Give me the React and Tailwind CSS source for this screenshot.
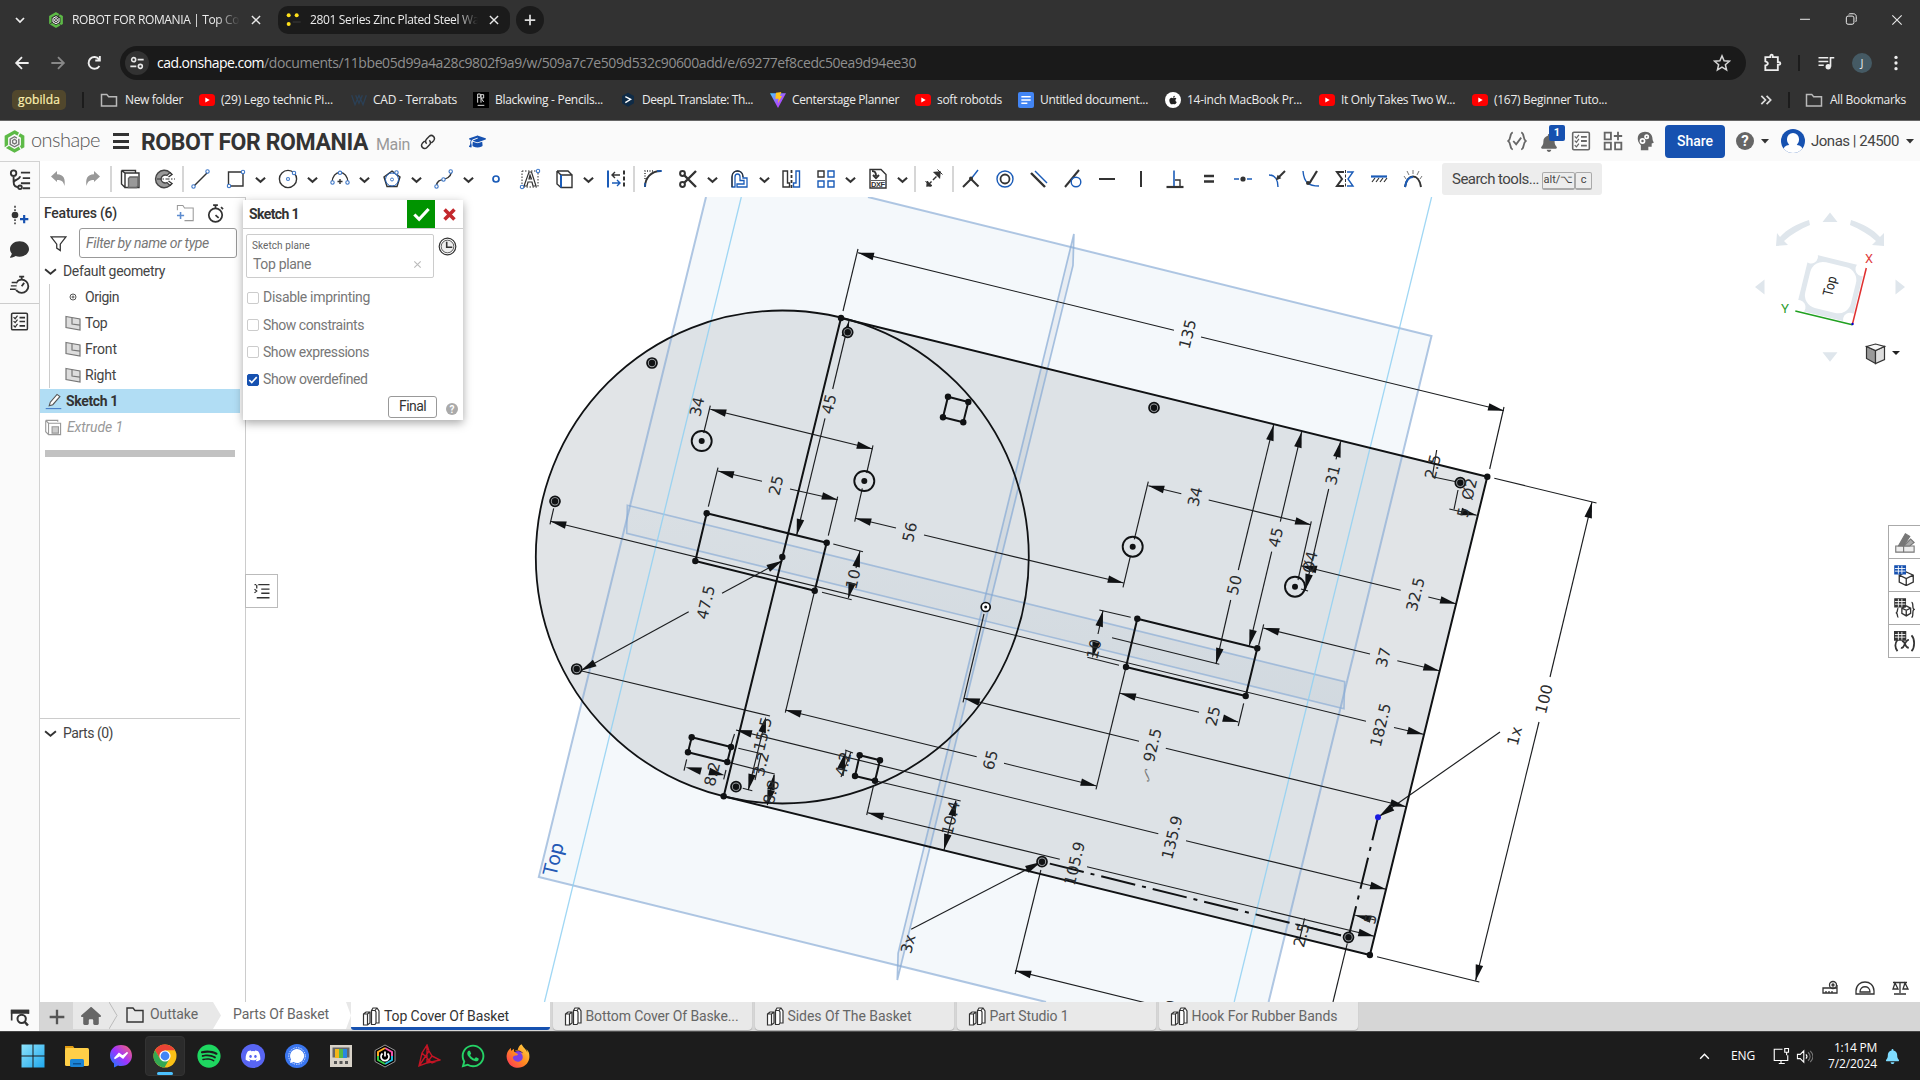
import React, { useLayoutEffect, useRef } from "react";
import { FaSpotify, FaWhatsapp, FaDiscord, FaFirefoxBrowser, FaApple, FaGraduationCap, FaBell, FaComment, FaHouse } from "react-icons/fa6";

/* Text whose tracking is adjusted so that it fills a given width. */
function Fit({ w, className = "", children }) {
  const ref = useRef(null);
  useLayoutEffect(() => {
    const el = ref.current;
    el.style.letterSpacing = "0px";
    const natural = el.getBoundingClientRect().width;
    el.style.letterSpacing = (w - natural) / el.textContent.length + "px";
  }, [w, children]);
  return <span ref={ref} className={"inline-block shrink-0 whitespace-pre " + className}>{children}</span>;
}

const Svg = ({ s = 24, className = "", children, ...p }) => (
  <svg width={s} height={s} viewBox="0 0 24 24" fill="none" stroke="#333" strokeWidth="1.5" className={"shrink-0 " + className} {...p}>{children}</svg>
);
const B = "#1b5cb8";

/* ---------- browser ---------- */
const OnshapeMark = ({ s = 16, grey = "#fff", bg = "#323232" }) => (
  <Svg s={s} stroke="none">
    <path d="M12 2.200 20.500 7v10L12 21.800 3.500 17V7Z" stroke="#5dba47" strokeWidth="3.600" fill={bg} />
    <path d="M0 20l6-4M18 2l-3 5M20 22l-3-5" stroke={bg} strokeWidth="1.300" />
    <path d="M16.500 9v6L12 17.500 7.500 15V9.500L12 7l2.500 1.400" stroke={grey} strokeWidth="1.500" />
    <path d="M12 9.800 14 11v2.300l-2 1.200-2-1.200V11Z" stroke={grey} strokeWidth="1.400" />
  </Svg>
);
const XIcon = ({ s = 16, c = "#e8e8e8", sw = 2.4 }) => <Svg s={s} stroke={c} strokeWidth={sw}><path d="m5 5 14 14M19 5 5 19" /></Svg>;
const YT = () => (
  <svg width="16" height="16" viewBox="0 0 16 16" className="shrink-0"><rect y="2" width="16" height="12" rx="3.500" fill="#f00" /><path d="m6.300 5.500 4.400 2.500-4.400 2.500Z" fill="#fff" /></svg>
);
const Folder = () => <Svg s={18} stroke="#b9b9b9" strokeWidth="2"><path d="M2 4.500h7l2.500 3H22v12.500H2Z" /></Svg>;

const bookmarks = [
  { i: <Folder />, t: "New folder", w: 58, b: "w-[99px]", g: "gap-[7px]" },
  { i: <YT />, t: "(29) Lego technic Pi...", w: 112, b: "w-[152px]" },
  { i: <Svg s={16} stroke="#2b4056" strokeWidth="2"><path d="m1 5 5 14 6-14 6 14 5-14M7 5l5 12 5-12" /></Svg>, t: "CAD - Terrabats", w: 84, b: "w-[122px]" },
  { i: <Svg s={16} stroke="#ddd" strokeWidth="1.500"><path d="M0 0h24v24H0Z" fill="#000" stroke="none" /><path d="M7 3v13M7 3h4v5H7m5 8V4h4v5h-4l4 6M7 20h10" /></Svg>, t: "Blackwing - Pencils...", w: 108, b: "w-[147px]" },
  { i: <Svg s={16} stroke="none"><path d="M12 1 21 6v11l-9 5-9-5V6Z" fill="#0f2b46" /><path d="m8 7 8 4-8 5" stroke="#fff" strokeWidth="2" /></Svg>, t: "DeepL Translate: Th...", w: 111, b: "w-[150px]" },
  { i: <Svg s={16} stroke="none"><defs><linearGradient id="vt" x1="0" y1="0" x2="1" y2="1"><stop stopColor="#41d1ff" /><stop offset=".5" stopColor="#a05bff" /><stop offset="1" stopColor="#bd34fe" /></linearGradient></defs><path d="M0 2h24L12 24Z" fill="url(#vt)" /><path d="m9 1 8-1-2 6h3l-6 11 1-7H8Z" fill="#ffc61a" /></Svg>, t: "Centerstage Planner", w: 107, b: "w-[145px]" },
  { i: <YT />, t: "soft robotds", w: 65, b: "w-[103px]" },
  { i: <Svg s={16} stroke="#fff" strokeWidth="2.200"><rect width="24" height="24" rx="3" fill="#4285f4" stroke="none" /><path d="M5 7h14M5 12h14M5 17h9" /></Svg>, t: "Untitled document...", w: 108, b: "w-[147px]" },
  { i: <span className="flex h-4 w-4 shrink-0 items-center justify-center rounded-full bg-white text-[10px] text-[#222]"><FaApple /></span>, t: "14-inch MacBook Pr...", w: 115, b: "w-[154px]" },
  { i: <YT />, t: "It Only Takes Two W...", w: 114, b: "w-[153px]" },
  { i: <YT />, t: "(167) Beginner Tuto...", w: 113, b: "w-[153px]" },
];

function Browser() {
  return (
    <div className="h-[121px] w-full border-b border-[#666] bg-[#323232] font-['Open_Sans',sans-serif] text-[12px] text-[#ececec]">
      <div className="flex h-[40px] items-center">
        <div className="flex w-[40px] justify-center"><Svg s={12} stroke="#eee" strokeWidth="3.500"><path d="m4 8 8 8 8-8" /></Svg></div>
        <div className="flex w-[238px] items-center pl-2"><OnshapeMark /><span className="ml-2 flex w-[168px] overflow-hidden [mask-image:linear-gradient(to_right,black_86%,transparent)]"><Fit w={167}>ROBOT FOR ROMANIA | Top Co</Fit></span><span className="ml-[9px]"><XIcon s={14} /></span></div>
        <div className="flex h-[28px] w-[232px] items-center rounded-[10px] bg-[#1b1b1b] pl-2">
          <Svg s={16} stroke="none"><circle cx="4" cy="5" r="3" fill="#ffe01a" /><circle cx="16" cy="5" r="3" fill="#ffe01a" /><circle cx="4" cy="18" r="3" fill="#ffe01a" /><path d="M10 14h12v2H10Z" fill="#333" /></Svg>
          <span className="ml-2 w-[168px] overflow-hidden [mask-image:linear-gradient(to_right,black_88%,transparent)]"><Fit w={169}>2801 Series Zinc Plated Steel Wa</Fit></span><span className="ml-[9px]"><XIcon s={14} /></span>
        </div>
        <div className="ml-[6px] flex h-[28px] w-[28px] items-center justify-center rounded-full bg-[#1b1b1b]"><Svg s={14} stroke="#ddd" strokeWidth="3"><path d="M12 3v18M3 12h18" /></Svg></div>
        <div className="ml-auto flex w-[138px]">
          <div className="flex w-[46px] justify-center"><Svg s={14} stroke="#eee" strokeWidth="1.700"><path d="M3.500 12.500h17" /></Svg></div>
          <div className="flex w-[46px] justify-center"><Svg s={14} stroke="#eee" strokeWidth="1.700"><rect x="4" y="7" width="13" height="14" rx="3" /><path d="M8 4c1-1 2-1 4-1h4c3 0 5 2 5 5v5c0 2 0 3-1 4" /></Svg></div>
          <div className="flex w-[46px] justify-center"><XIcon s={16} sw={1.700} /></div>
        </div>
      </div>
      <div className="flex h-[46px] items-center">
        <div className="flex w-[40px] shrink-0 justify-center pl-[4px]"><Svg s={20} stroke="#eee" strokeWidth="2.200"><path d="M20 12H5m7-7-7 7 7 7" /></Svg></div>
        <div className="flex w-[36px] shrink-0 justify-center"><Svg s={20} stroke="#888" strokeWidth="2.200"><path d="M4 12h15m-7-7 7 7-7 7" /></Svg></div>
        <div className="flex w-[36px] shrink-0 justify-center"><Svg s={20} stroke="#eee" strokeWidth="2.300"><path d="M18.500 15.500A7 7 0 1 1 18 7.500M19 3.500v5.500h-5.500" /></Svg></div>
        <div className="ml-2 flex h-[34px] w-[1626px] shrink-0 items-center rounded-full bg-[#1a1a1a] pl-[5px] pr-[15px]">
          <span className="flex h-6 w-6 items-center justify-center rounded-full bg-[#323232]"><Svg s={16} stroke="#e8e8e8" strokeWidth="2.400"><circle cx="7" cy="7" r="3" /><path d="M13 7h9M2 17h9" /><circle cx="17" cy="17" r="3" /></Svg></span>
          <div className="-mt-px ml-2 flex text-[14px]"><Fit w={107} className="text-white">cad.onshape.com</Fit><Fit w={652} className="text-[#8f8f8f]">/documents/11bbe05d99a4a28c9802f9a9/w/509a7c7e509d532c90600add/e/69277ef8cedc50ea9d94ee30</Fit></div>
          <Svg s={18} stroke="#d5d5d5" strokeWidth="2" className="ml-auto"><path d="m12 2.500 2.800 6.500 7 .6-5.300 4.600 1.600 6.900-6.100-3.700-6.100 3.700 1.600-6.900L2.200 9.600l7-.6Z" /></Svg>
        </div>
        <div className="flex w-[52px] shrink-0 justify-center"><Svg s={20} stroke="#eee" strokeWidth="2.200"><path d="M4 5h6V3.500a1.500 1.500 0 0 1 3 0V5h6v6h1.500a1.500 1.500 0 0 1 0 3H19v6.500H4V15c4-1 4-4 0-5Z" /></Svg></div>
        <div className="h-4 w-[2px] bg-[#1c1c1c]" />
        <div className="flex w-[52px] shrink-0 justify-center"><Svg s={18} stroke="#eee" strokeWidth="2.200"><path d="M2 5h13M2 10h13M2 15h7" /><circle cx="15" cy="17" r="2.500" fill="#eee" /><path d="M18 17V5h5" /></Svg></div>
        <div className="flex h-[20px] w-[20px] shrink-0 items-center justify-center rounded-full bg-[#455a64] text-[11px]">J</div>
        <div className="flex w-[52px] justify-center"><Svg s={18} stroke="none"><g fill="#eee"><circle cx="12" cy="4.500" r="2.200" /><circle cx="12" cy="12" r="2.200" /><circle cx="12" cy="19.500" r="2.200" /></g></Svg></div>
      </div>
      <div className="flex h-[28px] items-center">
        <div className="ml-[12px] flex h-[20px] w-[54px] items-center justify-center rounded-[5px] bg-[#51472c] text-[#fdf0b0] [-webkit-text-stroke:0.200px]"><Fit w={42}>gobilda</Fit></div>
        <div className="ml-4 h-4 w-[2px] bg-[#1c1c1c]" />
        <div className="ml-[16px] flex">
          {bookmarks.map((b, i) => <div key={i} className={"flex shrink-0 items-center " + (b.g || "gap-[6px]") + " " + b.b}>{b.i}<Fit w={b.w}>{b.t}</Fit></div>)}
        </div>
        <div className="ml-auto flex items-center"><Svg s={14} stroke="#ddd" strokeWidth="3"><path d="m4 5 7 7-7 7M13 5l7 7-7 7" /></Svg><div className="ml-[15px] h-4 w-[2px] bg-[#1c1c1c]" /><div className="ml-[15px] flex w-[115px] items-center gap-[7px]"><Folder /><Fit w={76}>All Bookmarks</Fit></div></div>
      </div>
    </div>
  );
}

/* ---------- document header ---------- */
const Caret = () => <svg width="8" height="5" viewBox="0 0 8 5" className="shrink-0"><path d="M0 0h8L4 4.500Z" fill="#333" /></svg>;

function Header() {
  const slot = "flex w-8 justify-center";
  return (
    <div className="flex h-[40px] w-full items-center bg-[#fafafa] font-[Roboto,sans-serif]">
      <div className="ml-[3px]"><OnshapeMark s={23} grey="#777" bg="#fafafa" /></div>
      <Fit w={69} className="ml-[5px] h-[28px] font-[Lato,sans-serif] text-[20px] font-light leading-[25px] text-[#555]">onshape</Fit>
      <div className="ml-[13px] flex w-[16px] flex-col gap-[3.500px]"><i className="h-[3px] bg-[#333]" /><i className="h-[3px] bg-[#333]" /><i className="h-[3px] bg-[#333]" /></div>
      <Fit w={227} className="ml-[12px] pt-[2px] text-[23px] font-bold leading-none text-[#333]">ROBOT FOR ROMANIA</Fit>
      <Fit w={34} className="ml-[8px] pt-[7px] text-[16px] text-[#999]">Main</Fit>
      <Svg s={16} strokeWidth="2.200" className="ml-[10px] mt-[2px]"><path d="M10 14.500a5 5 0 0 1 0-7L14 3.500c4-4 10 2 6.500 6.500l-3.500 3.500M14 9.500a5 5 0 0 1 0 7L10 20.500C6 24.500 0 18.500 3.500 14L7 10.500" /></Svg>
      <FaGraduationCap className="ml-[33px] text-[17px] text-[#1651b0]" />
      <div className="ml-auto flex items-center">
        <div className={slot}><Svg s={20} stroke="#666" strokeWidth="2.200"><path d="M7 2C3 2 5 10 1.500 12 5 14 3 22 7 22M17 2c4 0 2 8 5.500 10C19 14 21 22 17 22M7.500 12l3.500 4 6-8" /></Svg></div>
        <div className={slot + " relative"}><FaBell className="mt-[4px] text-[18px] text-[#666]" /><span className="absolute -top-[5px] left-[16px] flex h-4 w-4 items-center justify-center rounded-[2px] bg-[#1651b0] text-[11px] font-bold text-white">1</span></div>
        <div className={slot}><ListIcon s={20} c="#666" /></div>
        <div className={slot}><Svg s={20} stroke="#666" strokeWidth="2.200"><path d="M2 2h7.500v8H2ZM2 14h7.500v8H2ZM14.500 14H22v8h-7.500ZM18 1v10M13 6h10" /></Svg></div>
        <div className={slot}><Svg s={20} stroke="none"><path d="M12 1c6 0 9 4 9 8.500 0 2 1.500 3.500 1.500 4.500L20 15v4h-4v4H7v-6C1 12 2 1 12 1Z" fill="#666" /><circle cx="9" cy="12" r="2.500" stroke="#fff" strokeWidth="2" /><circle cx="14" cy="7" r="2" stroke="#fff" strokeWidth="2" /></Svg></div>
        <div className="ml-[4px] flex h-[33px] w-[60px] items-center justify-center rounded-[4px] bg-[#1651b0] text-[14px] font-medium text-white"><Fit w={36}>Share</Fit></div>
        <div className="ml-[11px] flex h-[18px] w-[18px] items-center justify-center rounded-full bg-[#666] text-[15px] font-bold text-white">?</div>
        <div className="ml-[7px]"><Caret /></div>
        <div className="relative ml-[12px] h-[24px] w-[24px] overflow-hidden rounded-full bg-[#1651b0]"><i className="absolute left-[6px] top-[4px] h-[13px] w-[12px] rounded-full bg-white" /><i className="absolute left-[2px] top-[16px] h-[12px] w-[20px] rounded-full bg-white" /></div>
        <Fit w={88} className="ml-[6px] text-[15px] text-[#444]">Jonas | 24500</Fit>
        <div className="ml-[7px] mr-[6px]"><Caret /></div>
      </div>
    </div>
  );
}

const ListIcon = ({ s = 20, c = "#333" }) => <Svg s={s} stroke={c} strokeWidth="1.900"><rect x="2" y="1.500" width="20" height="21" rx="1.500" /><path d="M12 7h7M12 12h7M12 17.500h7" strokeWidth="2.200" /><path d="m4.500 6.500 2 2 3-4M4.500 11.500l2 2 3-4M4.500 17l2 2 3-4" strokeWidth="1.500" /></Svg>;

/* ---------- toolbar ---------- */
const dot = (x, y) => <circle cx={x} cy={y} r="1.700" stroke="#3f78c8" strokeWidth="1.100" fill="#fff" />;
const T = {
  undo: <path d="M5 9.500l6-5.500v3.300c7 0 8.500 5 7.500 11.700-1-4.500-3-6-7.500-6V15Z" fill="#999" stroke="none" />,
  redo: <path d="M19 9.500l-6-5.500v3.300c-7 0-8.500 5-7.500 11.700 1-4.500 3-6 7.500-6V15Z" fill="#999" stroke="none" />,
  sketch: <><path d="M3.500 3.500h14v2M3.500 3.500V17l3.500 3.500M3.500 3.500 7 6h14v14.500H7V6" /><path d="M10.500 11.500 12 10h8v9l-1.500 1.500h-8Z" fill="#999" stroke="#666" /></>,
  revolve: <><path d="M17 5.500A8.700 8.700 0 1 0 17 18.500l-3-3a4 4 0 1 1 0-7Z" fill="#999" stroke="#444" /><path d="M4 12h18" strokeDasharray="4 1.500 1.500 1.500" strokeWidth="1.200" /><path d="m17 5.500 2 2-3.500 2.500M17 18.500l2-2-3.500-2.500" /></>,
  line: <><path d="m5 19 14-14" />{dot(4.5, 19.5)}{dot(18.5, 4.500)}</>,
  rect: <><path d="M4.500 5h14.500v14H4.500Z" />{dot(19, 5)}{dot(5, 19)}</>,
  circle: <><circle cx="12" cy="12" r="8.600" /><circle cx="12" cy="12" r="1.500" stroke="#3f78c8" strokeWidth="1.100" />{dot(18, 6)}</>,
  arc: <><path d="M4 16c0-14 16-14 16 0" />{dot(4.500, 15.500)}{dot(19.500, 15.500)}<path d="M12 12v5M9.500 14.500h5" />{dot(12, 5.800)}</>,
  poly: <><path d="M12 4l8 6-3 9.500H7L4 10Z" /><circle cx="12" cy="12.500" r="6.500" stroke={B} strokeWidth="1" /><circle cx="12" cy="12.500" r="1.500" stroke="#3f78c8" strokeWidth="1" />{dot(16.500, 5.500)}</>,
  spline: <><path d="M4.500 19C5 9 17 16 19.500 5" />{dot(4.500, 19.500)}{dot(18.700, 4.500)}{dot(11.500, 12.500)}</>,
  point: <circle cx="12" cy="12" r="3" stroke={B} strokeWidth="1.700" />,
  text: <><path d="M4 4h16v16H4Z" strokeDasharray="1.500 1.500" strokeWidth="1" /><path d="M6 19 11 5h2.500L18 19h-3l-1-4h-4l-1 4ZM11 12h2.500L12 8Z" strokeWidth="1.200" />{dot(20, 4)}{dot(4, 20)}</>,
  use: <><path d="M5 4h11l4 4M5 4v13l4 3.500h11V8H9L5 4" /><path d="M9 8v12.500" stroke={B} strokeWidth="2" /></>,
  mirror: <><path d="M4 3.500v17" stroke={B} strokeWidth="2" /><path d="M20 3.500v17" strokeDasharray="4 2" strokeWidth="2" /><path d="M8 16h8m-3-3 3 3-3 3" stroke={B} /><path d="M16 8H8m3-3L8 8l3 3" /></>,
  fillet: <><path d="M4 20C4 11 10 4 20 4" strokeWidth="2" /><path d="M4 20v-4M16 4h5" stroke={B} /><path d="M4 12V4h8" strokeDasharray="1 1.500" /></>,
  trim: <><path d="M20 4 8 16M20 20 8 8" strokeWidth="2.400" /><circle cx="6.500" cy="6.500" r="2.400" strokeWidth="2" /><circle cx="6.500" cy="17.500" r="2.400" strokeWidth="2" /></>,
  offset: <><path d="M4 20V10c0-8 11-8 11 0v1h4v9H9v-3h7v-3.500h-4V10c0-4-5-4-5 0v10Z" stroke={B} strokeWidth="1.300" /><path d="M4 20V10c0-8 11-8 11 0" strokeWidth="1.300" /></>,
  mir2: <><path d="M4 4h4.500v12h2v4H4Z" /><path d="M12.500 3v18" strokeDasharray="3 2" strokeWidth="1.800" /><path d="M14.500 20v-4H17V4h3.500v16Z" stroke={B} /></>,
  pattern: <><path d="M4 4h6v6H4Z" /><path d="M14 4h6v6h-6ZM4 14h6v6H4ZM14 14h6v6h-6Z" stroke={B} /></>,
  dxf: <><path d="M4 2.500h11l5 5V21H4Z" /><path d="M6 4c3 0 4 1 4 5M7 8l3 3 3-3" strokeWidth="2" /><path d="M5 13.500h14" strokeWidth=".8" /><text x="5" y="20" fontSize="7.500" fontWeight="bold" fill="#333" stroke="none" fontFamily="Liberation Sans" textLength="14">DXF</text></>,
  dim: <><path d="m6 18 11-11" strokeDasharray="5 2" /><path d="M5.500 14 5 19l5-.5M12.500 5.500 18 5l-.5 5.500Z" fill="#333" /><path d="M15.500 2.500l5 5M3.500 14l5 6" strokeWidth="1" /></>,
  coin: <><path d="M4 20 12 12 19.500 19.500" strokeWidth="2" /><path d="m12 12 7-9" stroke={B} /><circle cx="12" cy="11.500" r="2" fill="#333" stroke="none" /></>,
  conc: <><circle cx="12" cy="12" r="4.500" strokeWidth="1.800" /><circle cx="12" cy="12" r="8" stroke={B} /></>,
  par: <><path d="m4 6 14 14" strokeWidth="2.400" /><path d="m8 4 12 12" stroke={B} /></>,
  tan: <><path d="M4 20 18 3" strokeWidth="2" /><circle cx="15" cy="15" r="4.800" stroke={B} /></>,
  hor: <path d="M4 12h16" strokeWidth="2" />, ver: <path d="M12 4v16" strokeWidth="2" />,
  perp: <><path d="M3.500 20h17" strokeWidth="2.200" /><path d="M11 19V3.500" stroke={B} strokeWidth="1.600" /><path d="M12 13h5v6" /></>,
  eq: <path d="M7 9h10M7 14.500h10" strokeWidth="2.600" />,
  mid: <><path d="M3 12h5M16 12h5" stroke={B} strokeWidth="1.700" /><circle cx="12" cy="12" r="2.600" fill="#333" stroke="none" /></>,
  norm: <><path d="m20 4-8 8" strokeWidth="2" /><path d="M4 8c6 0 9 5 9 12" stroke={B} /><path d="m12 12 3-1-2-2Z" fill="#333" /></>,
  pierce: <><path d="M10 17 18 4" strokeWidth="2.200" /><path d="M4 4c1 12 6 15 16 15" stroke={B} /><circle cx="9" cy="16" r="2" fill="#333" stroke="none" /></>,
  sym: <><path d="M11 5H4l5 7-5 7h7" strokeWidth="2" /><path d="M12.500 3v18" strokeDasharray="3 1.500" strokeWidth="1" /><path d="M14 5h6l-5 7 5 7h-6" stroke={B} /></>,
  fix: <><path d="M4 9.500h16" stroke={B} strokeWidth="2.200" /><path d="m5 15 3-4M9 15l3-4M13 15l3-4M17 15l3-4" strokeWidth="1.200" /></>,
  curv: <><path d="M4 20C6 6 18 6 20 20" strokeWidth="2" /><path d="M4 20c1-6 4-10 8-10" stroke={B} strokeWidth="2" /><path d="M5 12 3 9M8 8 6 4M12 7V3M16 8l2-4M19 12l2-3" strokeWidth="1" stroke="#777" /></>,
};
const Tool = ({ n, c = "w-[35px]" }) => <div className={"flex shrink-0 justify-center " + c}><Svg s={24} strokeWidth="1.400">{T[n]}</Svg></div>;
const Chev = () => <div className="flex w-[17px] shrink-0 justify-start pl-[2px]"><Svg s={11} strokeWidth="4.500"><path d="m2 8 10 9L22 8" /></Svg></div>;
const Sep = () => <div className="h-[26px] w-[2px] shrink-0 bg-[#d6d6d6]" />;
const Drop = ({ n }) => <><Tool n={n} /><Chev /></>;

function Toolbar() {
  return (
    <div className="flex h-[36px] items-center bg-white font-[Roboto,sans-serif]">
      <Tool n="undo" /><Tool n="redo" /><Sep /><Tool n="sketch" /><Tool n="revolve" /><Sep /><Tool n="line" c="w-[34px]" />
      <Drop n="rect" /><Drop n="circle" /><Drop n="arc" /><Drop n="poly" /><Drop n="spline" /><Tool n="point" /><Tool n="text" c="w-[33px]" />
      <Drop n="use" /><Tool n="mirror" /><Sep /><Tool n="fillet" /><Drop n="trim" /><Drop n="offset" /><Tool n="mir2" c="w-[34px]" /><Drop n="pattern" /><Drop n="dxf" />
      <div className="w-[2px]" /><Sep /><Tool n="dim" c="w-[36px]" /><Sep />
      {["coin", "conc", "par", "tan", "hor", "ver", "perp", "eq", "mid", "norm", "pierce", "sym", "fix", "curv"].map((n) => <Tool key={n} n={n} c="w-[34px]" />)}
      <div className="ml-[12px] flex h-[32px] w-[160px] items-center rounded-[3px] bg-[#ededed] pl-[10px] text-[15px] text-[#444]">
        <Fit w={87}>Search tools...</Fit>
        <span className="ml-[3px] mt-[3px] flex h-[18px] w-[33px] items-center justify-center rounded-[2px] border border-b-2 border-[#aaa] text-[11px]">alt/⌥</span>
        <span className="mt-[3px] flex h-[18px] w-[17px] items-center justify-center rounded-[2px] border border-b-2 border-[#aaa] text-[11px]">c</span>
      </div>
    </div>
  );
}

/* ---------- left side ---------- */
const Stopwatch = ({ s = 19 }) => <Svg s={s} strokeWidth="2.200"><circle cx="12" cy="14" r="8.500" /><path d="M9 1.500h6M12 2v4M19 4l2.500 2.500M12 14l4 3.500" /></Svg>;
function Rail() {
  const cell = "flex w-full justify-center items-center ";
  return (
    <div className="flex h-[870px] w-[40px] shrink-0 flex-col items-center border-r border-t border-[#d2d2d2] bg-[#fafafa]">
      <div className={cell + "h-[35px]"}><Svg s={22} strokeWidth="2"><circle cx="5" cy="4.500" r="3" /><path d="M5 8v6c0 4 2 6 6 6M12 8c0 4-7 3-7 7M13 4h10M15 10h8M13 15.500h10M15 21h8" /><circle cx="12" cy="20" r="2" /></Svg></div>
      <div className={cell + "h-[35px]"}><Svg s={20} stroke="none"><path d="M6 1v22" stroke="#333" strokeWidth="1.800" strokeDasharray="2.200 1.800" /><circle cx="6" cy="12" r="4" fill="#333" /><path d="M17 12v10M12 17h10" stroke="#1651b0" strokeWidth="2.600" /></Svg></div>
      <div className={cell + "h-[35px]"}><FaComment className="text-[19px] text-[#333]" /></div>
      <div className={cell + "h-[36px]"}><Svg s={20} strokeWidth="2.200"><circle cx="14" cy="13.500" r="8" /><path d="M11 2h6M14 2v4M14 13.500l3-4" /><path d="M0 12h8M1 16h7M3 8h5" stroke="#fafafa" strokeWidth="4" /><path d="M2 9h7M1 13h7M0 17h7" strokeWidth="1.700" /></Svg></div>
      <div className="h-px w-full bg-[#ccc]" />
      <div className={cell + "h-[35px]"}><ListIcon s={19} /></div>
      <div className="mt-auto flex h-[27px] w-full items-center justify-center"><Svg s={20} strokeWidth="2"><path d="M2 15V3h20v4" /><path d="M2 3h20v3H2Z" fill="#333" /><circle cx="14" cy="13" r="5" strokeWidth="2.400" /><path d="m17.500 16.500 4 4.500" strokeWidth="3" /></Svg></div>
    </div>
  );
}
const PlaneIcon = () => <svg width="16" height="16" viewBox="0 0 16 16" fill="none" stroke="#777" strokeWidth="1.200"><path d="M1 1.500 15 4v11L1 12.500Z" fill="#ddd" /><path d="M7 3v6l8 1.200" /></svg>;
const chevD = <Svg s={13} strokeWidth="3.600" className="mr-[6px]"><path d="m2 8 10 8L22 8" /></Svg>;

function Features() {
  const row = "flex h-[26px] items-center text-[14px] text-[#444]";
  return (
    <div className="flex h-[805px] w-[206px] shrink-0 flex-col border-r border-t border-[#ccc] bg-white font-[Roboto,sans-serif]">
      <div className="flex h-[30px] items-center pl-[4px] pt-px">
        <Fit w={73} className="text-[14px] font-medium text-[#333]">Features (6)</Fit>
        <Svg s={19} stroke="#999" className="ml-[58px]"><path d="M3 8V2h7l2 3h11v16h-11" strokeWidth="1.300" /><path d="M7 10v9M2.500 14.500h9" stroke="#5d8ccf" strokeWidth="2" /></Svg>
        <div className="ml-[12px]"><Stopwatch /></div>
      </div>
      <div className="flex h-[30px] items-center pl-[10px]">
        <Svg s={17} strokeWidth="1.800"><path d="M1.500 2.500h21L14.500 13v9l-5-3.500V13Z" /></Svg>
        <div className="ml-[12px] flex h-[30px] w-[158px] items-center rounded-[3px] border border-[#999] pl-[6px] text-[14px] italic text-[#777]"><Fit w={123}>Filter by name or type</Fit></div>
      </div>
      <div className={row + " pl-[4px]"}>{chevD}<Fit w={102}>Default geometry</Fit></div>
      <div className="ml-[9px] border-l border-[#ccc]">
        <div className={row + " pl-[19px]"}><svg width="8" height="8" viewBox="0 0 8 8" fill="none" stroke="#555"><circle cx="4" cy="4" r="3" /><circle cx="4" cy="4" r="1" /></svg><Fit w={34} className="ml-[8px]">Origin</Fit></div>
        <div className={row + " gap-[4px] pl-[15px]"}><PlaneIcon /><Fit w={22}>Top</Fit></div>
        <div className={row + " gap-[4px] pl-[15px]"}><PlaneIcon /><Fit w={32}>Front</Fit></div>
        <div className={row + " gap-[4px] pl-[15px]"}><PlaneIcon /><Fit w={31}>Right</Fit></div>
      </div>
      <div className="mt-px flex h-[24px] w-[200px] items-center bg-[#b1ddf4] pl-[5px] text-[14px] font-bold text-[#333]"><Svg s={17} stroke="#555" strokeWidth="1.600"><path d="M6 18l1.500-5L17 2l4 3-10 11.500Z" fill="#fff" /><path d="M1 22h22" stroke="#4a80c8" /></Svg><Fit w={52} className="ml-[4px]">Sketch 1</Fit></div>
      <div className="flex h-[28px] items-center pl-[5px] pt-px text-[14px] italic text-[#999]"><Svg s={17} stroke="#999" strokeWidth="1.600"><path d="M1 2h17v2M1 2v16l4 4h17V6H5v16M1 2l4 4" /><path d="M10 11h9v9h-9Z" fill="#ccc" /></Svg><Fit w={56} className="ml-[5px]">Extrude 1</Fit></div>
      <div className="ml-[5px] mt-[9px] h-[7px] w-[190px] bg-[#c2c2c2]" />
      <div className="mt-[261px] w-[200px] border-t border-[#ccc]" />
      <div className={row + " pl-[4px] pt-[2px]"}>{chevD}<Fit w={50}>Parts (0)</Fit></div>
    </div>
  );
}

function SketchDialog() {
  const checks = [["Disable imprinting", 107, 0], ["Show constraints", 101, 0], ["Show expressions", 106, 0], ["Show overdefined", 104, 1]];
  return (
    <div className="absolute left-[243px] top-[39px] h-[220px] w-[220px] bg-white font-[Roboto,sans-serif] text-[14px] text-[#777] shadow-[0_3px_9px_rgba(0,0,0,0.350)]">
      <div className="flex h-[29px] items-center border-b border-[#ccc] pl-[6px] font-bold text-[#333]">
        <Fit w={50}>Sketch 1</Fit>
        <div className="ml-auto flex h-[28px] w-[28px] items-center justify-center bg-[#009400]"><Svg s={19} stroke="#fff" strokeWidth="4"><path d="m3 12 6 6L21 5" /></Svg></div>
        <div className="flex w-[28px] justify-center"><XIcon s={17} c="#c3282d" sw={5} /></div>
      </div>
      <div className="flex h-[49px] pl-[3px] pt-[5px]">
        <div className="h-[44px] w-[188px] rounded-[2px] border border-[#ccc] pl-[5px] pt-[3px]">
          <div className="flex h-[14px] items-center text-[10px] text-[#666]"><Fit w={58}>Sketch plane</Fit></div>
          <div className="flex h-[24px] items-center justify-between pl-[1px] pr-[10px]"><Fit w={58}>Top plane</Fit><XIcon s={11} c="#bbb" sw={2.500} /></div>
        </div>
        <Svg s={19} className="ml-[4px] mt-[3px]"><circle cx="12" cy="12" r="10.500" /><circle cx="12" cy="12" r="8" strokeWidth="1" fill="#eee" /><path d="M11 6v7h7" strokeWidth="2" /></Svg>
      </div>
      <div className="pl-[4px] pt-[6px]">
        {checks.map(([t, w, on]) => (
          <div key={t} className="flex h-[27.400px] items-center gap-[4px]">
            <span className={"flex h-[12px] w-[12px] items-center justify-center rounded-[2px] border " + (on ? "border-[#1651b0] bg-[#1651b0]" : "border-[#ccc] bg-white")}>{on ? <Svg s={10} stroke="#fff" strokeWidth="4"><path d="m3 12 6 6L21 5" /></Svg> : null}</span>
            <Fit w={w}>{t}</Fit>
          </div>
        ))}
      </div>
      <div className="-mt-px flex items-center justify-end pr-[5px] pt-[3px]">
        <div className="flex h-[22px] w-[49px] items-center justify-center rounded-[3px] border border-[#999] text-[#333]"><Fit w={27}>Final</Fit></div>
        <div className="ml-[9px] mt-[5px] flex h-[12px] w-[12px] items-center justify-center rounded-full bg-[#aaa] text-[10px] font-bold text-white">?</div>
      </div>
    </div>
  );
}

/* ---------- sketch canvas ---------- */
const UX = 0.9711, UY = 0.2388;
const unit = (x1, y1, x2, y2) => { const l = Math.hypot(x2 - x1, y2 - y1); return [(x2 - x1) / l, (y2 - y1) / l]; };
function Arrow({ x, y, d }) {
  const [a, b] = d, bx = x - a * 16, by = y - b * 16;
  return <path d={`M${x} ${y}L${bx - b * 3.8} ${by + a * 3.8}L${bx + b * 3.8} ${by - a * 3.8}Z`} fill="#101214" />;
}
const R = [UX, UY], L = [-UX, -UY], U = [UY, -UX], D = [-UY, UX];

const thin = [
  [843, 311, 858, 249], [858, 252.7, 1174, 330.3], [1201, 337, 1504, 410.7], [1504, 407, 1489.7, 469],
  [849, 321, 832.7, 389], [825, 418.3, 796.7, 535],
  [703.7, 433, 710.3, 405.7], [710.3, 409.3, 872.7, 449], [873, 445.3, 866.7, 473],
  [708.3, 506.7, 718, 467.7], [718, 471, 762, 481.3], [790, 489, 837.7, 499.7], [837.7, 496.7, 828.3, 535.7],
  [862.3, 488.3, 854.7, 521.7], [855.3, 518.3, 896, 528], [924, 535, 1123.7, 583], [1130.3, 556.7, 1123, 587.3],
  [1134.3, 539.3, 1148.3, 481.7], [1148.3, 485.7, 1181.3, 493.7], [1208.7, 500, 1311, 524.7], [1311.3, 521.3, 1298, 580],
  [1273.7, 424.7, 1238.3, 570], [1230.7, 600, 1216, 664], [1112, 637.7, 1219.3, 664.3],
  [1301.7, 431.7, 1280.3, 521.7], [1271.7, 551.7, 1249.3, 645.7],
  [1340.7, 441.3, 1336, 459.3], [1328.7, 489, 1305.3, 590], [1301, 589, 1308, 591],
  [1301, 565.7, 1400.7, 590.3], [1428.3, 597, 1456, 603.7],
  [1263.7, 624.3, 1258.7, 645], [1263.3, 628, 1370, 654], [1397.3, 660.7, 1439.3, 670.7],
  [1130.7, 617.3, 1099.3, 610], [1103, 610.7, 1098, 634], [1087.3, 657.3, 1119, 665.3],
  [550.3, 521.3, 1366, 721.3], [1394, 727.500, 1423.3, 734.3], [553.7, 508.3, 550, 524.3],
  [782.3, 560.7, 722, 593.3], [688.7, 611.7, 580.7, 670.7],
  [833.3, 544, 863, 551.7], [822, 592.3, 851.7, 599.7], [860, 551, 856, 568], [851, 588, 848.3, 598],
  [814.7, 590.7, 785.3, 712.7], [785.3, 710, 976.7, 756.7], [1004, 763.3, 1096.6, 786], [1126, 667, 1096, 789.3],
  [963.8, 698.3, 1139, 741.3], [1165.8, 748.3, 1406.2, 806.7], [984, 614, 963, 702.3],
  [1120, 693.3, 1199, 712.3], [1243.7, 703.3, 1238.2, 726], [1228, 719, 1238, 722],
  [736, 730, 1158.3, 833.7], [1186, 840.7, 1386, 889.3], [734.5, 734, 730, 748],
  [580.7, 670.7, 770, 716], [764, 726, 748.3, 790], [742.7, 788.3, 752.3, 790.7],
  [686.7, 759.3, 684, 770.7], [726, 770, 723.7, 779.3],
  [738.3, 748.3, 762.7, 754], [727.3, 762, 774.7, 774], [774, 775, 767.3, 805], [761, 754, 755, 780],
  [845, 750, 853, 753], [846, 751, 843, 776], [851, 752, 841, 777],
  [875, 780.7, 960.7, 801], [956, 801, 944, 850], [873.3, 786.7, 866.7, 815],
  [867.7, 812.7, 1059.8, 859.3], [1087, 866.7, 1374.2, 936.3],
  [1039.7, 862.7, 911.2, 929.3], [1304.6, 918.3, 1299.5, 940], [1295, 924, 1341, 935], [1355.2, 915.3, 1375, 920],
  [1040.9, 870, 1015.2, 974], [1015.2, 970.7, 1144.5, 1002.500], [1347.3, 943.3, 1333, 1002],
  [1378, 817.3, 1500, 732], [1377, 956.7, 1479.3, 982], [1494.3, 478.3, 1596.5, 503], [1475.6, 980.7, 1539, 722], [1550, 677, 1592, 502],
  [1436.7, 450, 1432.3, 476.7], [1432.3, 476.7, 1455, 481.500], [1458, 490, 1454, 509.3], [1449.3, 509, 1476.7, 515.3],
];
const arrows = [
  [858, 252.7, L], [1504, 410.7, R], [849, 321, U], [796.7, 535, D], [710.3, 409.3, L], [872.7, 449, R], [718, 471, L], [837.7, 499.7, R],
  [855.3, 518.3, L], [1123.7, 583, R], [1148.3, 485.7, L], [1311, 524.7, R], [1273.7, 424.7, U], [1216, 664, D], [1301.7, 431.7, U], [1249.3, 645.7, D],
  [1340.7, 441.3, U], [1305.3, 590, D], [1301, 565.7, L], [1456, 603.7, R], [1263.3, 628, L], [1439.3, 670.7, R], [1103, 610.7, U], [1092.3, 658, D],
  [550.3, 521.3, L], [1423.3, 734.3, R], [782.3, 560.7, unit(722, 593.3, 782.3, 560.7)], [580.7, 670.7, unit(688.7, 611.7, 580.7, 670.7)],
  [860, 551, U], [848.3, 598.3, D], [785.3, 710, L], [1096.6, 786, R], [963.8, 698.3, L], [1406.2, 806.7, R], [1120, 693.3, L], [1238.6, 722, R],
  [736, 730, L], [1386, 889.3, R], [766, 716.7, U], [748.3, 790, D], [685.5, 767.3, L], [724.7, 775.3, R], [774.7, 774, U], [767.3, 805.7, D],
  [845, 753, U], [956, 800, U], [944, 850, D], [867.7, 812.7, L], [1374.2, 936.3, R], [1041, 862, unit(911.2, 929.3, 1041, 862)],
  [1355.2, 915.3, L], [1015.2, 970.7, L], [1379, 816.500, unit(1500, 732, 1378, 817.3)], [1475.6, 980.7, D], [1592, 502, U], [1476.7, 515.3, R],
];
const labels = [
  [1187.5, 334, "135"], [829, 404, "45"], [697, 406.7, "34"], [776, 485.3, "25"], [909.7, 532, "56"], [1195, 496.7, "34"], [1234.3, 585, "50"],
  [1275.7, 537.3, "45"], [1332.7, 475, "31"], [1310, 562, "Ø4"], [1415.3, 594.3, "32.5"], [1383.3, 657.3, "37"], [1094, 649, "10"],
  [1380.500, 725, "182.5"], [705.7, 602.3, "47.5"], [853, 579, "10"], [990.3, 760, "65"], [1152.4, 745, "92.5"], [1212.9, 716, "25"],
  [1172, 837.3, "135.9"], [762.7, 734, "15.5"], [712, 774, "8.2"], [761, 764, "3.2"], [771, 792, "8.8"], [843, 764, "4.2"], [950.7, 818, "10.4"],
  [1074.500, 863.3, "105.9"], [908, 944, "3x"], [1301.4, 935, "2.5"], [1370.500, 919, "5"], [1170, 1010, "60"], [1514.500, 736, "1x"], [1544, 699, "100"],
  [1432.7, 466.7, "2.5"], [1469.3, 489, "Ø2"], [1463.3, 512.500, "5"],
];
const rects = [
  [[706.7, 513.3], [826.7, 542.7], [814.7, 590.7], [695.3, 561]],
  [[1137.3, 618.7], [1257.3, 648.3], [1245.7, 696], [1126, 667]],
  [[948, 396.7], [968.3, 402], [963.3, 422.3], [943, 417.3]],
  [[859.7, 755.3], [880, 760.3], [875, 780.7], [855, 776]],
  [[691.7, 737.3], [731, 747], [727.3, 762], [688, 752.3]],
];
const smallHoles = [[652, 363], [555, 501.3], [847.7, 332.3], [576.7, 669], [736, 786.7], [1154, 407.7], [1460.3, 482.7], [1042, 861.7], [1348.500, 937.3]];
const bigHoles = [[701.7, 441], [864.3, 481], [1132.7, 546.7], [1295, 586.7]];

function Canvas() {
  return (
    <svg width="1674" height="805" viewBox="246 197 1674 805" className="block shrink-0 bg-white" fill="none">
      <defs><linearGradient id="band" x1="0" y1="0" x2="0" y2="1"><stop stopColor="#7d98b0" stopOpacity=".04" /><stop offset="1" stopColor="#7d98b0" stopOpacity=".12" /></linearGradient></defs>
      <path d="M538.8 877 706 197 706 160 719 160 1431.500 336 1264 1019 1113 1019Z" fill="#f4f8fb" />
      <path d="M841 318 1487.300 476.700 1369.900 955 723.700 796.300A246.500 246.500 0 0 1 535.800 557A246.500 246.500 0 0 1 841 318Z" fill="rgb(208 213 217 / .63)" />
      <path d="M627.300 505.300 1344.700 681.700 1344 708.700 626.700 533.300Z" fill="url(#band)" stroke="#86a9d4" strokeOpacity=".65" strokeWidth="1.600" />
      <path d="M706 197 538.800 877 1046 1002M868 197 1431.500 336 1268.600 1002" stroke="#86a9d4" strokeOpacity=".65" strokeWidth="2" />
      <path d="M898.100 953.300 1073.900 234 1073 265.500 897.300 980Z" fill="#7d98b0" fillOpacity=".1" stroke="#86a9d4" strokeOpacity=".7" strokeWidth="1.700" />
      <path d="M741.300 197 544.500 1002M1431.600 197 1234.200 1002" stroke="#8fd0f2" strokeOpacity=".85" strokeWidth="1.300" />
      <text transform="translate(560 861) rotate(-76.2)" textAnchor="middle" fontFamily="Roboto" fontSize="20" fill="#2358b5">Top</text>
      <g stroke="#1c1e20" strokeWidth="1.150">{thin.map((l, i) => <path key={i} d={`M${l[0]} ${l[1]}L${l[2]} ${l[3]}`} />)}</g>
      <g stroke="#101214" strokeWidth="2">
        <path d="M841 318 1487.300 476.700 1369.900 955 723.700 796.300Z" />
        <circle cx="782.300" cy="557" r="246.500" strokeWidth="1.800" />
        {rects.map((r, i) => <path key={i} d={"M" + r.map((p) => p.join(" ")).join("L") + "Z"} />)}
        <path d="M1042 861.700 1348.500 937.300" strokeDasharray="35 7 4 7" strokeDashoffset="-8" />
        <path d="M1348.500 937.300 1378 817.300" strokeDasharray="32 7 4 7" />
      </g>
      {arrows.map(([x, y, d], i) => <Arrow key={i} x={x} y={y} d={d} />)}
      {bigHoles.map(([x, y], i) => <g key={i}><circle cx={x} cy={y} r="10" stroke="#101214" strokeWidth="1.900" /><circle cx={x} cy={y} r="3" fill="#101214" /></g>)}
      {smallHoles.map(([x, y], i) => <g key={i}><circle cx={x} cy={y} r="5" stroke="#101214" strokeWidth="1.700" fill="#a0a4a7" /><circle cx={x} cy={y} r="3.200" fill="#101214" /></g>)}
      {rects.flat().concat([[841, 318], [1487.3, 476.7], [1369.9, 955], [723.7, 796.3], [782.3, 557]]).map(([x, y], i) => <circle key={i} cx={x} cy={y} r="3.200" fill="#101214" />)}
      <circle cx="1378" cy="817.300" r="3" fill="#1a1ae0" />
      <circle cx="985.700" cy="607" r="4.500" fill="#fff" stroke="#101214" strokeWidth="1.700" /><circle cx="985.700" cy="607" r="1.500" fill="#101214" />
      <g fontFamily="DejaVu Sans" fontSize="15.500" fill="#2a2c2e" textAnchor="middle">
        {labels.map(([x, y, t], i) => <text key={i} transform={`translate(${x} ${y}) rotate(-76.2)`} y="5.500">{t}</text>)}
      </g>
      <text transform="translate(1146.400 774.300) rotate(-30)" textAnchor="middle" y="5" fontFamily="DejaVu Serif" fontSize="13" fontStyle="italic" fill="#777">∫</text>

      <g fill="#dfe6ec">
        <path d="M1830 212.500l7.500 9.500h-15ZM1830 361.700l7.500-9.500h-15ZM1755 287l9.500-7.500v15ZM1905 287l-9.500-7.500v15Z" />
        <path d="M1809 220c-12 4-22 9-29 17l-3-4-1 13 12-1-4-4c8-7 16-12 26-16ZM1851 220c12 4 22 9 29 17l4-4v13l-12-1 4-4c-8-7-16-12-26-16Z" />
      </g>
      <g transform="rotate(13.800 1830 288)">
        <rect x="1802" y="259" width="57" height="58" fill="#e0e7ed" />
        <rect x="1807" y="264" width="47" height="47" rx="13" fill="#fff" />
        <g fill="#fff"><circle cx="1804" cy="262" r="7" /><circle cx="1857" cy="262" r="7" /><circle cx="1804" cy="314" r="7" /><circle cx="1857" cy="314" r="7" /></g>
      </g>
      <path d="M1795.300 311 1852.300 324.700" stroke="#20a020" strokeWidth="1.500" /><path d="M1852.300 324.700 1866.300 268" stroke="#e03030" strokeWidth="1.500" /><circle cx="1852.500" cy="324" r="1.200" fill="#00c" />
      <text x="1865" y="263" fontFamily="Roboto" fontSize="13" fill="#e04040" textLength="8" lengthAdjust="spacingAndGlyphs">X</text>
      <text x="1781" y="313" fontFamily="Roboto" fontSize="13" fill="#30a030" textLength="8" lengthAdjust="spacingAndGlyphs">Y</text>
      <text transform="translate(1829 286) rotate(-76.2)" y="5.500" textAnchor="middle" fontFamily="Roboto" fontSize="14" textLength="20" lengthAdjust="spacingAndGlyphs" fill="#222">Top</text>
      <g stroke="#333" strokeWidth="1.200"><path d="M1866.500 346.500l9 4v13l-9-5Z" fill="#999" /><path d="M1884.500 346.500v13l-9 4v-13Z" fill="#ddd" /><path d="M1866.500 346.500l9-2.500 9 2.500-9 4Z" fill="#f8f8f8" /></g>
      <path d="M1892 351h8l-4 4Z" fill="#222" />

      <g stroke="#333" strokeWidth="1.300">
        <path d="M1823 988h14v5h-14ZM1826 993v-2M1829 993v-2M1832 993v-2M1837 988v-3" /><circle cx="1833" cy="985" r="3.500" /><circle cx="1833" cy="985" r="1" />
        <path d="M1856 994v-3c0-12 18-12 18 0v3ZM1860 992c0-7 10-7 10 0Z" />
        <path d="M1900 982v11M1894 994h12M1893 982.500h14M1895 983l-2 6h5ZM1905 983l-2 6h5Z" />
      </g>
    </svg>
  );
}

function SideTables() {
  const c = "flex h-[33px] items-center justify-center border-b border-[#aaa] ";
  const grid = (f) => <><path d="M1 1h12v9H1Z" fill={f} stroke={f} /><path d="M1 4h12M1 7h12M5 1v9M9 1v9" stroke="#fff" strokeWidth="1" /></>;
  return (
    <div className="absolute right-0 top-[364px] w-[32px] border-l border-t border-[#aaa] bg-white">
      <div className={c}><Svg s={21} stroke="#777" strokeWidth="1.300"><path d="M2 16h21v7H2Z" fill="#eee" /><path d="m5 16 8-14 5 3-7 11Z" fill="#777" /><path d="m11 16 8-8 4 4-5 4Z" fill="#aaa" /><path d="M11 16v7" /></Svg></div>
      <div className={c}><Svg s={21}>{<path d="M14 8l8 3.500v8l-8 4-8-4v-8ZM6 11.500l8 4 8-4M14 15.500v8" />}{grid("#1651b0")}</Svg></div>
      <div className={c}><Svg s={21}><path d="M14 9l5 2.500v6l-5 3-5-3v-6ZM9 11.500l5 2.500 5-2.500M14 14v6M5 12c-2 0 0 5-3 5 3 0 1 5 3 5M20 5c3 0 0 7 3 8-3 1 0 9-3 9" />{grid("#333")}</Svg></div>
      <div className={c}><Svg s={21} strokeWidth="2"><path d="M4 10c-3 4-3 9 0 13M20 5c4 4 4 14 0 18M8 19c4 2 4-9 9-9M9 12c4-2 3 8 8 7" />{grid("#333")}</Svg></div>
    </div>
  );
}

/* ---------- bottom ---------- */
const PartIcon = () => <svg width="18" height="19" viewBox="0 0 18 19" fill="#fff" stroke="#333" strokeWidth="1.200" className="shrink-0"><path d="M1.500 7 4 5h4v11l-2.500 2h-4ZM1.500 7h4v11M5.500 7 8 5M9.500 3.500 11 1h4l2 3v12h-3l-1 1.500H9.500ZM9.500 3.500H13l1 1.500v11M13 3.500 15 1" /></svg>;
function DocTabs() {
  const tabs = [["Top Cover Of Basket", 125, 1], ["Bottom Cover Of Baske...", 153], ["Sides Of The Basket", 124], ["Part Studio 1", 79], ["Hook For Rubber Bands", 146]];
  return (
    <div className="flex h-[29px] bg-[#d6d6d6] font-[Roboto,sans-serif] text-[14px] text-[#666]">
      <div className="flex w-[33px] items-center justify-center"><Svg s={16} stroke="#555" strokeWidth="3.500"><path d="M12 1v22M1 12h22" /></Svg></div>
      <div className="flex h-[27px] w-[278px] bg-[#e8e8e8]">
        <div className="flex w-[36px] items-center justify-center text-[20px] text-[#666]"><FaHouse /></div>
        <svg width="9" height="27" viewBox="0 0 9 27" fill="none" stroke="#bbb"><path d="m0 0 8 13.500L0 27" /></svg>
        <div className="flex w-[95px] items-center pl-[8px] pb-[2px]"><svg width="18" height="16" viewBox="0 0 18 16" fill="none" stroke="#333" strokeWidth="1.400" className="mr-[6px]"><path d="M1 1h6l2 2.500h8V15H1Z" /></svg><Fit w={48}>Outtake</Fit></div>
        <div className="flex w-[138px] items-center bg-white pb-[2px] pl-[20px] [clip-path:polygon(0_0,133px_0,100%_50%,133px_100%,0_100%,8px_50%)]"><Fit w={96}>Parts Of Basket</Fit></div>
      </div>
      {tabs.map(([t, w, on], i) => (
        <div key={t} className={"flex h-[28px] items-center gap-[4px] pl-[11px] " + (i ? "ml-[2.500px] w-[199.500px] rounded-b-[4px] bg-[#e9e9e9] shadow-[0_1px_1px_#aaa]" : "w-[199px] rounded-b-[3px] border-b-[3px] border-[#1651b0] bg-white pt-[3px] text-[#333]")}><PartIcon /><Fit w={w}>{t}</Fit></div>
      ))}
    </div>
  );
}

function Taskbar() {
  const s = "flex h-[40px] w-[44.100px] items-center justify-center";
  return (
    <div className="flex h-[49px] items-center border-t border-[#444] bg-[#1c1c1c] font-['Open_Sans',sans-serif] text-[12px] text-white">
      <div className="ml-[10.500px] flex">
        <div className={s}><Svg s={24} stroke="none"><defs><linearGradient id="win" x1="0" y1="0" x2="1" y2="1"><stop stopColor="#8ee3fb" /><stop offset="1" stopColor="#1fa8ee" /></linearGradient></defs><path d="M.5.500h11v11H.5ZM12.500.500h11v11h-11ZM.5 12.500h11v11H.5ZM12.500 12.500h11v11h-11Z" fill="url(#win)" /></Svg></div>
        <div className={s}><Svg s={24} stroke="none"><path d="M0 2h8l2 3H0Z" fill="#e09b12" /><rect y="4" width="24" height="18" rx="1.500" fill="#ffcf48" /><rect x="5" y="15" width="14" height="8" rx="1.500" fill="#1a84d6" /><path d="M8 19h8v1.500H8Z" fill="#0b5394" /></Svg></div>
        <div className={s}><Svg s={24} stroke="none"><defs><linearGradient id="ms" x1="0" y1="1" x2="1" y2="0"><stop stopColor="#0a84ff" /><stop offset=".5" stopColor="#a033ff" /><stop offset="1" stopColor="#ff6968" /></linearGradient></defs><path d="M12 1c7 0 11 5 11 10.500S19 22 12 22c-1 0-2 0-3-.5L5 23.500V19.500C2.500 17.500 1 15 1 11.500 1 6 5 1 12 1Z" fill="url(#ms)" /><path d="m5.500 14.500 4.500-5 3.500 2.500 5-3.500-4.500 5.500-3.500-2.500Z" fill="#fff" stroke="#fff" /></Svg></div>
        <div className={s + " relative"}><div className="flex h-[40px] w-[40px] items-center justify-center rounded-[4px] border border-[#333] bg-[#2b2b2b]"><Svg s={24} stroke="none"><circle cx="12" cy="12" r="11.500" fill="#fbc116" /><path d="M2 6.200A11.500 11.500 0 0 1 22 6.300H12L7 15Z" fill="#ea4335" /><path d="M2 6.200A11.500 11.500 0 0 0 11.500 23.500l5-8.700H7Z" fill="#34a853" /><circle cx="12" cy="12" r="5.600" fill="#fff" /><circle cx="12" cy="12" r="4.400" fill="#4285f4" /></Svg></div><i className="absolute bottom-[1px] left-[14px] h-[3px] w-[16px] rounded-full bg-[#4cc2ff]" /></div>
        <div className={s}><FaSpotify className="text-[24px] text-[#1ed760]" /></div>
        <div className={s}><span className="flex h-[24px] w-[24px] items-center justify-center rounded-full bg-[#5865f2] text-[16px]"><FaDiscord /></span></div>
        <div className={s}><Svg s={24} stroke="none"><circle cx="12" cy="12" r="12" fill="#3a76f0" /><path d="M12 5a7 7 0 1 1-3.500 13L5 19l1-3.500A7 7 0 0 1 12 5Z" fill="#fff" /><circle cx="12" cy="12" r="8.300" stroke="#fff" strokeWidth=".8" strokeDasharray="1.500 1" /></Svg></div>
        <div className={s}><Svg s={24} stroke="none"><path d="M1 1h22v22H1Z" fill="#d8d2c8" /><path d="M3.500 3.500h17v10h-17Z" fill="#666" /><path d="M6 5h4v9H6Z" fill="#f2b61a" /><path d="M10 5h4v9h-4Z" fill="#54b948" /><path d="M14 5h4v9h-4Z" fill="#2a86e0" /><path d="M5 17h3v3H5ZM10.500 17h3v3h-3ZM16 17h3v3h-3Z" fill="#555" /></Svg></div>
        <div className={s}><Svg s={24} strokeWidth="2"><path d="M12 1 22 6.500v11L12 23 2 17.500v-11Z" stroke="#999" strokeWidth="1" fill="#000" /><path d="M12 4 19 8v4" stroke="#e5a" /><path d="M19 12v4l-7 4" stroke="#2bd" /><path d="M12 20 5 16v-4" stroke="#3c4" /><path d="M5 12V8l7-4" stroke="#fa2" /><path d="M9.500 9.500a4 4 0 1 0 5 0M12 7.500v5" stroke="#fff" strokeWidth="1.700" /></Svg></div>
        <div className={s}><Svg s={24} stroke="#c41424" strokeWidth="1.400"><path d="M10 1 5 9l-3 13 8-3 5-7-3-5ZM5 9l10 10 8-3-8-4M10 19l13-3M2 22l10-15M10 1v18" /></Svg></div>
        <div className={s}><FaWhatsapp className="text-[26px] text-[#25d366]" /></div>
        <div className={s}><span className="relative flex"><i className="absolute left-[6px] top-[7px] h-[12px] w-[12px] rounded-full bg-[#7b3fe4]" /><svg width="0" height="0" className="absolute"><defs><linearGradient id="fx" x1="1" y1="0" x2="0" y2="1"><stop stopColor="#ffe04a" /><stop offset=".5" stopColor="#ff8a1f" /><stop offset="1" stopColor="#ff2a5f" /></linearGradient></defs></svg><FaFirefoxBrowser className="relative text-[24px]" fill="url(#fx)" /></span></div>
      </div>
      <div className="ml-auto flex items-center">
        <Svg s={13} stroke="#fff" strokeWidth="2.600"><path d="m4 16 8-8 8 8" /></Svg>
        <Fit w={24} className="ml-[20px]">ENG</Fit>
        <Svg s={18} stroke="#fff" strokeWidth="1.500" className="ml-[17px]"><path d="M14 3H3v15h18v-7M9 22h8M12 18v4" /><path d="M17 2h5v5h-5ZM19.500 7v4" /></Svg>
        <Svg s={17} stroke="#fff" strokeWidth="1.500" className="ml-[6px]"><path d="M2 9h4l5-5v16l-5-5H2ZM14 9c2 2 2 4 0 6" /><path d="M17 6c4 4 4 8 0 12M20 4c5 5 5 11 0 16" stroke="#777" /></Svg>
        <div className="ml-[6px] flex w-[58px] flex-col items-end leading-[16px]"><Fit w={43}>1:14 PM</Fit><Fit w={49}>7/2/2024</Fit></div>
        <FaBell className="ml-[8px] mr-[20px] text-[15px] text-[#7edcff]" />
      </div>
    </div>
  );
}

export default function App() {
  return (
    <div className="h-[1080px] w-[1920px] overflow-hidden bg-white">
      <Browser />
      <Header />
      <div className="relative flex">
        <Rail />
        <div className="flex flex-col">
          <Toolbar />
          <div className="flex"><Features /><Canvas /></div>
          <DocTabs />
        </div>
        <SketchDialog />
        <div className="absolute left-[245px] top-[413px] flex h-[34px] w-[33px] items-center justify-center border border-[#bbb] bg-white"><Svg s={18} strokeWidth="1.700"><path d="M7 3.500h15M11 9.500h11M11 15h11M9 21h13M2 3.500h2M2 9.500 5 12l-3 2.500M5 3.500v5M5 21h4" /></Svg></div>
        <SideTables />
      </div>
      <Taskbar />
    </div>
  );
}
